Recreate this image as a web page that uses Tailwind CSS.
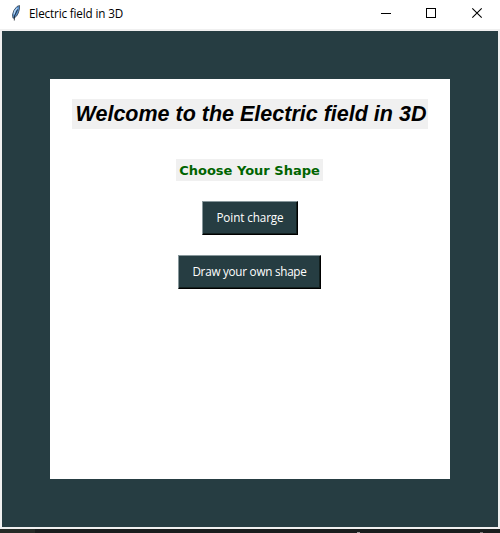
<!DOCTYPE html>
<html lang="en">
<head>
<meta charset="utf-8">
<title>Electric field in 3D</title>
<script src="https://cdn.jsdelivr.net/npm/@tailwindcss/browser@4"></script>
</head>
<body class="w-[500px] h-[533px] overflow-hidden bg-[#191d1d] flex flex-col">
  <div class="h-[529px] shrink-0 bg-[#f0f0f0] flex flex-col">
    <header class="h-[29px] shrink-0 bg-white flex items-start justify-between">
      <div class="flex items-start pl-[9px] pt-[4px] gap-[4px]">
        <svg class="w-4 h-[18px]" viewBox="0 0 16 18" fill="none">
          <path d="M4 14.2 L3.5 11 Q4 6 8 2.5 L10.5 1.5 Q11 5 9.3 9 Q8 12.5 5.5 13.8 Z" fill="#5a93d2" stroke="#34404c" stroke-width=".8"/>
          <path d="M5 10.5 Q5.3 6.5 8.3 4" stroke="#b5d6f5" stroke-width="1.2"/>
          <path d="M5.3 16.5 L5.5 12 L8.6 5.5" stroke="#101820" stroke-width=".8"/>
        </svg>
        <span class="font-['Open_Sans','Noto_Sans',sans-serif] text-[11.7px] leading-[18px] tracking-[-0.15px] text-black whitespace-nowrap">Electric field in 3D</span>
      </div>
      <svg class="w-[140px] h-[29px]" viewBox="0 0 140 29" fill="none" stroke="#000" shape-rendering="crispEdges">
        <path d="M21 13.5H31"/>
        <rect x="66.5" y="8.5" width="9" height="9"/>
        <path d="M112.3 8.3L121.7 17.7M121.7 8.3L112.3 17.7" shape-rendering="geometricPrecision" stroke-width="1.1"/>
      </svg>
    </header>
    <main class="mt-[2px] mx-[2px] h-[496px] bg-[#263d42] flex justify-center pt-[48px]">
      <section class="w-[400px] h-[400px] bg-white flex flex-col items-center pt-5">
        <h1 class="w-[356px] h-[30px] shrink-0 bg-[#f0f0f0] flex items-center justify-center pl-[2px] font-['Liberation_Sans',sans-serif] font-bold italic text-[21.5px] leading-[30px] text-black whitespace-nowrap">Welcome to the Electric field in 3D</h1>
        <h2 class="mt-[30px] mr-px w-[147px] h-[22px] shrink-0 bg-[#f0f0f0] flex items-center justify-center pt-[2px] font-['DejaVu_Sans',sans-serif] font-bold text-[13px] leading-[20px] text-[#006400] whitespace-nowrap">Choose Your Shape</h2>
        <button class="mt-5 w-[96px] h-[34px] shrink-0 bg-[#263d42] border border-t-[#87979b] border-l-[#87979b] border-r-black border-b-black shadow-[inset_-1px_-1px_0_#13201f] pb-[2px] font-['Open_Sans','Noto_Sans',sans-serif] text-[11.7px] leading-[30px] tracking-[-0.1px] text-white whitespace-nowrap">Point charge</button>
        <button class="mt-5 mr-px w-[143px] h-[34px] shrink-0 bg-[#263d42] border border-t-[#87979b] border-l-[#87979b] border-r-black border-b-black shadow-[inset_-1px_-1px_0_#13201f] pb-[2px] font-['Open_Sans','Noto_Sans',sans-serif] text-[11.7px] leading-[30px] tracking-[-0.25px] text-white whitespace-nowrap">Draw your own shape</button>
      </section>
    </main>
  </div>
  <footer class="h-1 flex items-end">
    <div class="w-[35px] h-1 bg-[#252b27]"></div>
    <div class="w-[322px]"></div>
    <div class="w-[3px] h-px bg-[#999]"></div>
    <div class="w-[120px]"></div>
    <div class="w-[3px] h-px bg-[#777]"></div>
  </footer>
</body>
</html>
